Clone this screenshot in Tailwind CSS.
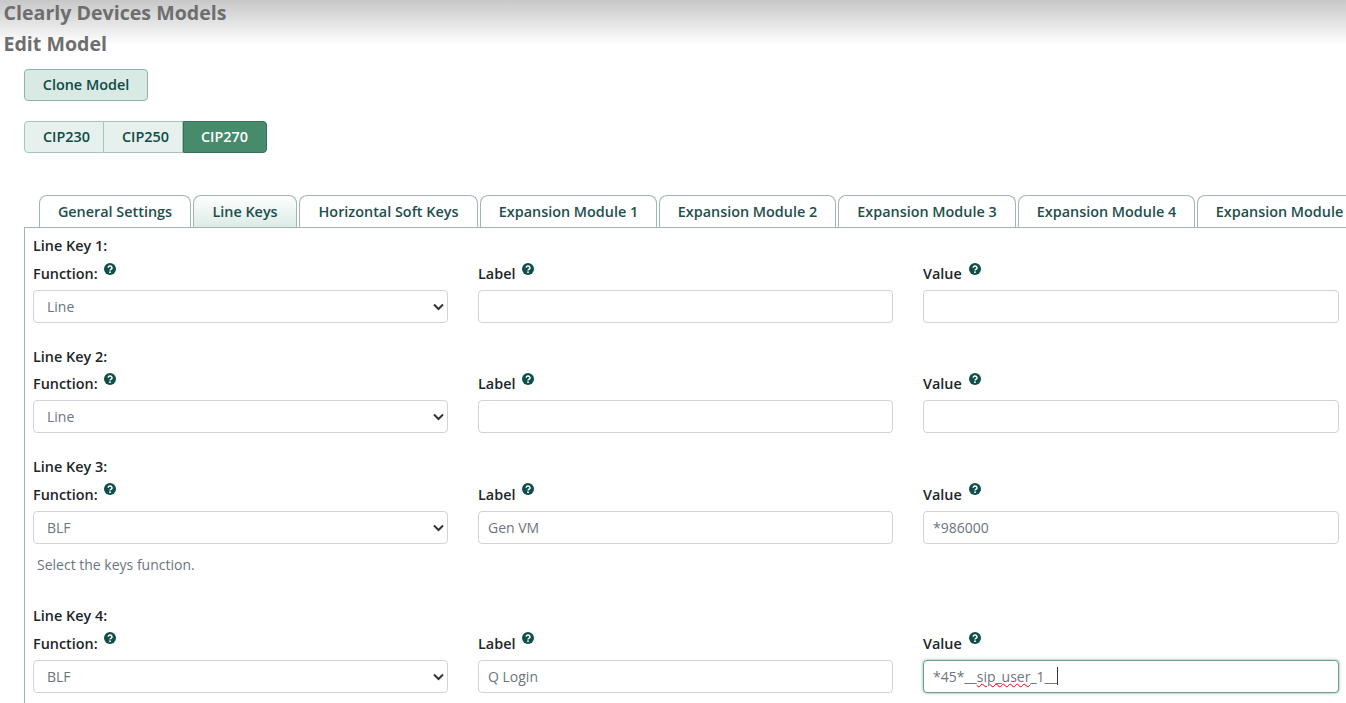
<!DOCTYPE html>
<html lang="en">
<head>
  <meta charset="UTF-8">
  <title>Edit Model</title>
  <script src="https://cdn.jsdelivr.net/npm/@tailwindcss/browser@4"></script>
</head>
<body class="bg-white overflow-hidden font-['Open_Sans',sans-serif]">
  <div class="w-[1346px] h-[703px] overflow-hidden relative">
    <!-- Header -->
    <header class="h-[48px] bg-gradient-to-b from-[#c4c4c4] to-white pl-[3.5px] text-[#6e6e6e] font-bold text-[19.6px] leading-[31px]">
      <h1 class="h-[28px] -mt-[3px]">Clearly Devices Models</h1>
      <h2 class="mt-[3px]">Edit Model</h2>
    </header>

    <div class="pl-[24px] pt-[24px]">
      <button class="block w-[124px] h-[32px] rounded-[4px] border border-[#8fb5a8] bg-[#d9e9e3] text-[#0f4a46] text-[14.4px] font-semibold">Clone Model</button>
      <div class="flex mt-[20px] w-[243px] h-[32px] text-[14.4px] font-semibold text-[#0f4a46]">
        <button class="w-[80px] pl-[18px] text-left rounded-l-[4px] border border-[#a5c4ba] bg-[#e6f0ec]">CIP230</button>
        <button class="w-[79px] pl-[18px] text-left border-y border-r border-[#a5c4ba] bg-[#e6f0ec]">CIP250</button>
        <button class="w-[84px] pl-[17px] text-left rounded-r-[4px] border border-[#35705a] bg-[#458b6c] text-white">CIP270</button>
      </div>
    </div>

    <!-- Tabs -->
    <nav class="flex mt-[42px] pl-[39px] h-[32px] gap-[2px] whitespace-nowrap text-[14.4px] font-semibold text-[#1d4f4d] relative z-10">
      <a class="shrink-0 w-[152px] h-[32px] flex items-center justify-center rounded-t-[8px] border border-b-0 border-[#9fb8b1] bg-white">General Settings</a>
      <a class="shrink-0 w-[104px] h-[32px] flex items-center justify-center rounded-t-[8px] border border-b-0 border-[#9fb8b1] bg-gradient-to-b from-white to-[#dcebe5]">Line Keys</a>
      <a class="shrink-0 w-[179px] h-[32px] flex items-center justify-center rounded-t-[8px] border border-b-0 border-[#9fb8b1] bg-white">Horizontal Soft Keys</a>
      <a class="shrink-0 w-[177px] h-[32px] flex items-center justify-center rounded-t-[8px] border border-b-0 border-[#9fb8b1] bg-white">Expansion Module 1</a>
      <a class="shrink-0 w-[177px] h-[32px] flex items-center justify-center rounded-t-[8px] border border-b-0 border-[#9fb8b1] bg-white">Expansion Module 2</a>
      <a class="shrink-0 w-[178px] h-[32px] flex items-center justify-center rounded-t-[8px] border border-b-0 border-[#9fb8b1] bg-white">Expansion Module 3</a>
      <a class="shrink-0 w-[177px] h-[32px] flex items-center justify-center rounded-t-[8px] border border-b-0 border-[#9fb8b1] bg-white">Expansion Module 4</a>
      <a class="shrink-0 w-[177px] h-[32px] flex items-center justify-center rounded-t-[8px] border border-b-0 border-[#9fb8b1] bg-white">Expansion Module 5</a>
    </nav>

    <!-- Line keys -->
    <main class="ml-[24px] border-t border-l border-[#9fb8b1] pl-[8px] pr-[7px] text-[14px] text-[#212529] h-[500px]">
      <section class="pt-[8px] h-[119px]">
        <div class="font-semibold text-[14.4px] leading-[20px]">Line Key 1:</div>
        <div class="grid grid-cols-[415px_415px_416px] gap-x-[30px] mt-[6px]">
          <div>
            <div class="h-[28px] flex items-start font-semibold text-[14.4px] leading-[20px] pt-[2px]">Function:<svg class="w-[12px] h-[12px] ml-[6px] mt-[-1px]" viewBox="0 0 12 12"><circle cx="6" cy="6" r="6" fill="#0f4f4a"/><path d="M4.2 4.7a1.9 1.7 0 1 1 2.8 1.5c-.7.4-1 .7-1 1.4" fill="none" stroke="#fff" stroke-width="1.5"/><rect x="5.2" y="8.4" width="1.6" height="1.6" fill="#fff"/></svg></div>
            <div class="relative"><select class="appearance-none w-full h-[33px] rounded-[4px] border border-[#ced4da] bg-white pl-[13px] pr-[2px] text-[14px] text-[#6c757d]"><option>Line</option></select><svg class="absolute right-[4px] top-[13px] w-[11px] h-[8px]" viewBox="0 0 11 8"><path d="M1 1.5l4.5 4.5L10 1.5" fill="none" stroke="#333" stroke-width="2"/></svg></div>
          </div>
          <div>
            <div class="h-[28px] flex items-start font-semibold text-[14.4px] leading-[20px] pt-[2px]">Label<svg class="w-[12px] h-[12px] ml-[7px] mt-[-1px]" viewBox="0 0 12 12"><circle cx="6" cy="6" r="6" fill="#0f4f4a"/><path d="M4.2 4.7a1.9 1.7 0 1 1 2.8 1.5c-.7.4-1 .7-1 1.4" fill="none" stroke="#fff" stroke-width="1.5"/><rect x="5.2" y="8.4" width="1.6" height="1.6" fill="#fff"/></svg></div>
            <input class="w-full h-[33px] rounded-[4px] border border-[#ced4da] bg-white px-[9px] text-[14px] text-[#6c757d]" value="">
          </div>
          <div>
            <div class="h-[28px] flex items-start font-semibold text-[14.4px] leading-[20px] pt-[2px]">Value<svg class="w-[12px] h-[12px] ml-[7px] mt-[-1px]" viewBox="0 0 12 12"><circle cx="6" cy="6" r="6" fill="#0f4f4a"/><path d="M4.2 4.7a1.9 1.7 0 1 1 2.8 1.5c-.7.4-1 .7-1 1.4" fill="none" stroke="#fff" stroke-width="1.5"/><rect x="5.2" y="8.4" width="1.6" height="1.6" fill="#fff"/></svg></div>
            <input class="w-full h-[33px] rounded-[4px] border border-[#ced4da] bg-white px-[9px] text-[14px] text-[#6c757d]" value="">
          </div>
        </div>
      </section>
      <section class="h-[110px]">
        <div class="font-semibold text-[14.4px] leading-[20px]">Line Key 2:</div>
        <div class="grid grid-cols-[415px_415px_416px] gap-x-[30px] mt-[6px]">
          <div>
            <div class="h-[27px] flex items-start font-semibold text-[14.4px] leading-[20px] pt-[1px]">Function:<svg class="w-[12px] h-[12px] ml-[6px] mt-[-1px]" viewBox="0 0 12 12"><circle cx="6" cy="6" r="6" fill="#0f4f4a"/><path d="M4.2 4.7a1.9 1.7 0 1 1 2.8 1.5c-.7.4-1 .7-1 1.4" fill="none" stroke="#fff" stroke-width="1.5"/><rect x="5.2" y="8.4" width="1.6" height="1.6" fill="#fff"/></svg></div>
            <div class="relative"><select class="appearance-none w-full h-[33px] rounded-[4px] border border-[#ced4da] bg-white pl-[13px] pr-[2px] text-[14px] text-[#6c757d]"><option>Line</option></select><svg class="absolute right-[4px] top-[13px] w-[11px] h-[8px]" viewBox="0 0 11 8"><path d="M1 1.5l4.5 4.5L10 1.5" fill="none" stroke="#333" stroke-width="2"/></svg></div>
          </div>
          <div>
            <div class="h-[27px] flex items-start font-semibold text-[14.4px] leading-[20px] pt-[1px]">Label<svg class="w-[12px] h-[12px] ml-[7px] mt-[-1px]" viewBox="0 0 12 12"><circle cx="6" cy="6" r="6" fill="#0f4f4a"/><path d="M4.2 4.7a1.9 1.7 0 1 1 2.8 1.5c-.7.4-1 .7-1 1.4" fill="none" stroke="#fff" stroke-width="1.5"/><rect x="5.2" y="8.4" width="1.6" height="1.6" fill="#fff"/></svg></div>
            <input class="w-full h-[33px] rounded-[4px] border border-[#ced4da] bg-white px-[9px] text-[14px] text-[#6c757d]" value="">
          </div>
          <div>
            <div class="h-[27px] flex items-start font-semibold text-[14.4px] leading-[20px] pt-[1px]">Value<svg class="w-[12px] h-[12px] ml-[7px] mt-[-1px]" viewBox="0 0 12 12"><circle cx="6" cy="6" r="6" fill="#0f4f4a"/><path d="M4.2 4.7a1.9 1.7 0 1 1 2.8 1.5c-.7.4-1 .7-1 1.4" fill="none" stroke="#fff" stroke-width="1.5"/><rect x="5.2" y="8.4" width="1.6" height="1.6" fill="#fff"/></svg></div>
            <input class="w-full h-[33px] rounded-[4px] border border-[#ced4da] bg-white px-[9px] text-[14px] text-[#6c757d]" value="">
          </div>
        </div>
      </section>
      <section class="h-[149px]">
        <div class="font-semibold text-[14.4px] leading-[20px]">Line Key 3:</div>
        <div class="grid grid-cols-[415px_415px_416px] gap-x-[30px] mt-[6px]">
          <div>
            <div class="h-[28px] flex items-start font-semibold text-[14.4px] leading-[20px] pt-[2px]">Function:<svg class="w-[12px] h-[12px] ml-[6px] mt-[-2px]" viewBox="0 0 12 12"><circle cx="6" cy="6" r="6" fill="#0f4f4a"/><path d="M4.2 4.7a1.9 1.7 0 1 1 2.8 1.5c-.7.4-1 .7-1 1.4" fill="none" stroke="#fff" stroke-width="1.5"/><rect x="5.2" y="8.4" width="1.6" height="1.6" fill="#fff"/></svg></div>
            <div class="relative"><select class="appearance-none w-full h-[33px] rounded-[4px] border border-[#ced4da] bg-white pl-[13px] pr-[2px] text-[14px] text-[#6c757d]"><option>BLF</option></select><svg class="absolute right-[4px] top-[13px] w-[11px] h-[8px]" viewBox="0 0 11 8"><path d="M1 1.5l4.5 4.5L10 1.5" fill="none" stroke="#333" stroke-width="2"/></svg></div>
            <p class="mt-[11px] pl-[4px] leading-[20px] text-[#6c757d]">Select the keys function.</p>
          </div>
          <div>
            <div class="h-[28px] flex items-start font-semibold text-[14.4px] leading-[20px] pt-[2px]">Label<svg class="w-[12px] h-[12px] ml-[7px] mt-[-2px]" viewBox="0 0 12 12"><circle cx="6" cy="6" r="6" fill="#0f4f4a"/><path d="M4.2 4.7a1.9 1.7 0 1 1 2.8 1.5c-.7.4-1 .7-1 1.4" fill="none" stroke="#fff" stroke-width="1.5"/><rect x="5.2" y="8.4" width="1.6" height="1.6" fill="#fff"/></svg></div>
            <input class="w-full h-[33px] rounded-[4px] border border-[#ced4da] bg-white px-[9px] text-[14px] text-[#6c757d]" value="Gen VM">
          </div>
          <div>
            <div class="h-[28px] flex items-start font-semibold text-[14.4px] leading-[20px] pt-[2px]">Value<svg class="w-[12px] h-[12px] ml-[7px] mt-[-2px]" viewBox="0 0 12 12"><circle cx="6" cy="6" r="6" fill="#0f4f4a"/><path d="M4.2 4.7a1.9 1.7 0 1 1 2.8 1.5c-.7.4-1 .7-1 1.4" fill="none" stroke="#fff" stroke-width="1.5"/><rect x="5.2" y="8.4" width="1.6" height="1.6" fill="#fff"/></svg></div>
            <input class="w-full h-[33px] rounded-[4px] border border-[#ced4da] bg-white px-[9px] text-[14px] text-[#6c757d]" value="*986000">
          </div>
        </div>
      </section>
      <section>
        <div class="font-semibold text-[14.4px] leading-[20px]">Line Key 4:</div>
        <div class="grid grid-cols-[415px_415px_416px] gap-x-[30px] mt-[6px]">
          <div>
            <div class="h-[28px] flex items-start font-semibold text-[14.4px] leading-[20px] pt-[2px]">Function:<svg class="w-[12px] h-[12px] ml-[6px] mt-[-2px]" viewBox="0 0 12 12"><circle cx="6" cy="6" r="6" fill="#0f4f4a"/><path d="M4.2 4.7a1.9 1.7 0 1 1 2.8 1.5c-.7.4-1 .7-1 1.4" fill="none" stroke="#fff" stroke-width="1.5"/><rect x="5.2" y="8.4" width="1.6" height="1.6" fill="#fff"/></svg></div>
            <div class="relative"><select class="appearance-none w-full h-[33px] rounded-[4px] border border-[#ced4da] bg-white pl-[13px] pr-[2px] text-[14px] text-[#6c757d]"><option>BLF</option></select><svg class="absolute right-[4px] top-[13px] w-[11px] h-[8px]" viewBox="0 0 11 8"><path d="M1 1.5l4.5 4.5L10 1.5" fill="none" stroke="#333" stroke-width="2"/></svg></div>
          </div>
          <div>
            <div class="h-[28px] flex items-start font-semibold text-[14.4px] leading-[20px] pt-[2px]">Label<svg class="w-[12px] h-[12px] ml-[7px] mt-[-2px]" viewBox="0 0 12 12"><circle cx="6" cy="6" r="6" fill="#0f4f4a"/><path d="M4.2 4.7a1.9 1.7 0 1 1 2.8 1.5c-.7.4-1 .7-1 1.4" fill="none" stroke="#fff" stroke-width="1.5"/><rect x="5.2" y="8.4" width="1.6" height="1.6" fill="#fff"/></svg></div>
            <input class="w-full h-[33px] rounded-[4px] border border-[#ced4da] bg-white px-[9px] text-[14px] text-[#6c757d]" value="Q Login">
          </div>
          <div>
            <div class="h-[28px] flex items-start font-semibold text-[14.4px] leading-[20px] pt-[2px]">Value<svg class="w-[12px] h-[12px] ml-[7px] mt-[-2px]" viewBox="0 0 12 12"><circle cx="6" cy="6" r="6" fill="#0f4f4a"/><path d="M4.2 4.7a1.9 1.7 0 1 1 2.8 1.5c-.7.4-1 .7-1 1.4" fill="none" stroke="#fff" stroke-width="1.5"/><rect x="5.2" y="8.4" width="1.6" height="1.6" fill="#fff"/></svg></div>
            <div class="w-full h-[33px] rounded-[4px] border border-[#6f9e90] shadow-[0_0_3px_#7fa89c] bg-white px-[9px] text-[14px] leading-[31px] text-[#6c757d] flex"><span>*45*__</span><span class="underline decoration-wavy decoration-red-600 decoration-1">sip_user</span><span>_1__</span><span class="w-px h-[18px] mt-[6px] bg-[#333]"></span></div>
          </div>
        </div>
      </section>
    </main>
  </div>
</body>
</html>
